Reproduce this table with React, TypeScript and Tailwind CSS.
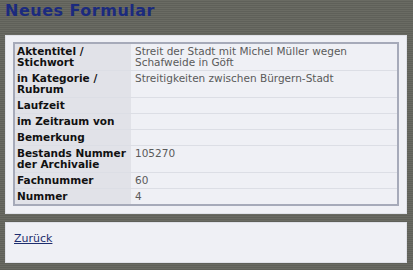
const rows: { label: string; value: string }[] = [
  { label: 'Aktentitel / Stichwort', value: 'Streit der Stadt mit Michel Müller wegen Schafweide in Göft' },
  { label: 'in Kategorie / Rubrum', value: 'Streitigkeiten zwischen Bürgern-Stadt' },
  { label: 'Laufzeit', value: '' },
  { label: 'im Zeitraum von', value: '' },
  { label: 'Bemerkung', value: '' },
  { label: 'Bestands Nummer der Archivalie', value: '105270' },
  { label: 'Fachnummer', value: '60' },
  { label: 'Nummer', value: '4' },
]

export default function App() {
  return (
    <div className="w-[413px] h-[270px] overflow-hidden bg-[repeating-linear-gradient(180deg,#6a6b63_0px,#6a6b63_1px,#5f6059_1px,#5f6059_2px)] font-['Verdana','DejaVu_Sans',sans-serif] text-[10.5px]">
      <h1 className="pl-[5px] h-[35px] text-[16px] tracking-[0.5px] leading-[22px] font-bold text-[#1b2a7e]">Neues Formular</h1>

      {/* Datenblatt */}
      <div className="mx-[5px] w-[402px] bg-[#eff0f5] border border-[#dfe1e8] pt-[6px] pb-[7px] px-[7px]">
        <table className="w-full table-fixed border-collapse border-2 border-[#a6aab9]">
          <colgroup>
            <col className="w-[117px]" />
            <col />
          </colgroup>
          <tbody>
            {rows.map((r, i) => (
              <tr key={r.label} className={i < rows.length - 1 ? 'border-b border-[#dcdee5]' : ''}>
                <td className="bg-[#e1e2e8] pl-[2px] pr-0 py-[2px] leading-[11px] font-bold text-[#111] align-top">
                  {r.label}
                </td>
                <td className="pl-[4px] pr-1 py-[2px] leading-[11px] text-[#5a5a5a] align-top">
                  {r.value}
                </td>
              </tr>
            ))}
          </tbody>
        </table>
      </div>

      {/* Navigation */}
      <div className="mt-[8px] mx-[5px] w-[402px] h-[41px] bg-[#eff0f5] border border-[#dfe1e8] pl-[8px] pt-[8px]">
        <a href="#" className="text-[11px] leading-[14px] text-[#1d2d6e] underline">Zurück</a>
      </div>
    </div>
  )
}
